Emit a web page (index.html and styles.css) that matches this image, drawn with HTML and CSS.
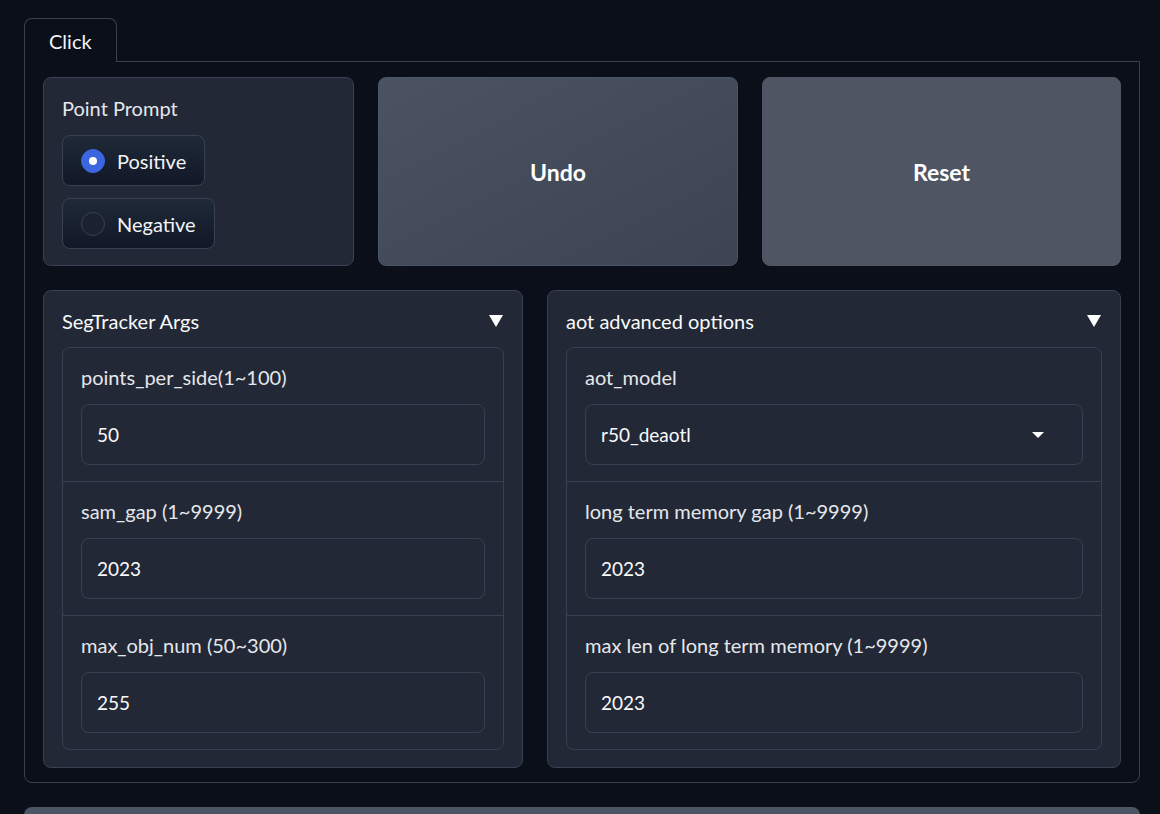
FILE: index.html
```html
<!DOCTYPE html>
<html lang="en">
<head>
<meta charset="utf-8">
<title>SegTracker</title>
<link rel="stylesheet" href="styles.css">
</head>
<body>
<div class="tabs">
  <div class="tab-nav">
    <button class="tab selected">Click</button>
  </div>
  <div class="tab-panel">
    <div class="row row-top">
      <div class="block prompt-block">
        <div class="block-label">Point Prompt</div>
        <div class="radio-group">
          <label class="radio-item"><span class="radio checked"></span><span>Positive</span></label>
          <label class="radio-item"><span class="radio"></span><span>Negative</span></label>
        </div>
      </div>
      <button class="btn btn-undo">Undo</button>
      <button class="btn btn-reset">Reset</button>
    </div>
    <div class="row row-bottom">
      <div class="block accordion">
        <div class="acc-head">
          <span>SegTracker Args</span>
          <svg class="acc-icon" width="14" height="12" viewBox="0 0 14 12"><polygon points="0,0 14,0 7,12" fill="#ffffff"/></svg>
        </div>
        <div class="group">
          <div class="field">
            <div class="field-label">points_per_side(1~100)</div>
            <div class="input">50</div>
          </div>
          <div class="field">
            <div class="field-label">sam_gap (1~9999)</div>
            <div class="input">2023</div>
          </div>
          <div class="field">
            <div class="field-label">max_obj_num (50~300)</div>
            <div class="input">255</div>
          </div>
        </div>
      </div>
      <div class="block accordion">
        <div class="acc-head">
          <span>aot advanced options</span>
          <svg class="acc-icon" width="14" height="12" viewBox="0 0 14 12"><polygon points="0,0 14,0 7,12" fill="#ffffff"/></svg>
        </div>
        <div class="group">
          <div class="field">
            <div class="field-label">aot_model</div>
            <div class="input select"><span>r50_deaotl</span>
              <svg class="caret" width="12" height="6" viewBox="0 0 12 6"><polygon points="0,0 12,0 6,6" fill="#ffffff"/></svg>
            </div>
          </div>
          <div class="field">
            <div class="field-label">long term memory gap (1~9999)</div>
            <div class="input">2023</div>
          </div>
          <div class="field">
            <div class="field-label">max len of long term memory (1~9999)</div>
            <div class="input">2023</div>
          </div>
        </div>
      </div>
    </div>
  </div>
</div>
<div class="next-btn"></div>
</body>
</html>
```

FILE: styles.css
```css
* { box-sizing: border-box; }
html, body { margin: 0; }
body {
  background: #0b0f19;
  padding: 18px 20px 0 24px;
  font-family: "Source Sans Pro", Lato, "Noto Sans", sans-serif;
  color: #e5e7eb;
  overflow: hidden;
}
.tabs { display: flex; flex-direction: column; }
.tab-nav { display: flex; }
.tab {
  position: relative;
  z-index: 1;
  height: 44px;
  margin-bottom: -1px;
  padding: 0 24px;
  background: #0b0f19;
  border: 1px solid #374151;
  border-bottom: none;
  border-radius: 8px 8px 0 0;
  color: #f3f4f6;
  font-family: inherit;
  font-size: 20px;
}
.tab-panel {
  border: 1px solid #374151;
  border-radius: 0 0 8px 8px;
  padding: 15px 18px 14px 18px;
  display: flex;
  flex-direction: column;
  gap: 24px;
}
.row { display: grid; gap: 24px; }
.row-top { height: 189px; grid-template-columns: 311fr 360fr 359fr; }
.row-bottom { grid-template-columns: 480fr 574fr; }
.block {
  background: #222836;
  border: 1px solid #374151;
  border-radius: 8px;
  min-width: 0;
}
.prompt-block {
  padding: 17px 18px 15px 18px;
}
.block-label {
  font-size: 20px;
  line-height: 26px;
  color: #e5e7eb;
  margin-bottom: 14px;
}
.radio-group { display: flex; flex-wrap: wrap; gap: 12px; }
.radio-item {
  display: inline-flex;
  align-items: center;
  gap: 12px;
  height: 51px;
  padding: 0 18px;
  border: 1px solid #374151;
  border-radius: 8px;
  background: linear-gradient(to top, #111827, #1f2937);
  font-size: 20px;
  color: #f3f4f6;
}
.radio {
  width: 24px;
  height: 24px;
  border-radius: 50%;
  border: 1px solid #374151;
  background: #1b2130;
  display: inline-flex;
  align-items: center;
  justify-content: center;
}
.radio.checked { background: #3b66e0; border-color: #3b66e0; }
.radio.checked::after {
  content: "";
  width: 8px;
  height: 8px;
  border-radius: 50%;
  background: #ffffff;
}
.btn {
  border-radius: 8px;
  border: 1px solid #4b5563;
  color: #ffffff;
  font-family: inherit;
  font-size: 23px;
  font-weight: 700;
  min-width: 0;
}
.btn-undo {
  background: linear-gradient(to bottom right, #4b5262, #3c4353);
}
.btn-reset {
  background: #4f5563;
  border-color: #4f5563;
}
.accordion {
  padding: 17px 18px 17px 18px;
  display: flex;
  flex-direction: column;
  gap: 13px;
}
.acc-head {
  display: flex;
  justify-content: space-between;
  align-items: center;
  font-size: 20px;
  line-height: 26px;
  color: #f9fafb;
}
.acc-icon { margin-right: 1px; }
.group {
  border: 1px solid #374151;
  border-radius: 8px;
  display: flex;
  flex-direction: column;
}
.field {
  padding: 16px 18px;
  display: flex;
  flex-direction: column;
  gap: 14px;
}
.field + .field { border-top: 1px solid #374151; }
.field-label {
  font-size: 20px;
  line-height: 26px;
  color: #e5e7eb;
}
.input {
  height: 61px;
  border: 1px solid #374151;
  border-radius: 8px;
  padding: 0 15px;
  display: flex;
  align-items: center;
  font-size: 19px;
  color: #f9fafb;
}
.select { justify-content: space-between; padding-right: 38px; }
.next-btn {
  margin-top: 24px;
  height: 40px;
  background: #4b5563;
  border-radius: 8px 8px 0 0;
}
```
